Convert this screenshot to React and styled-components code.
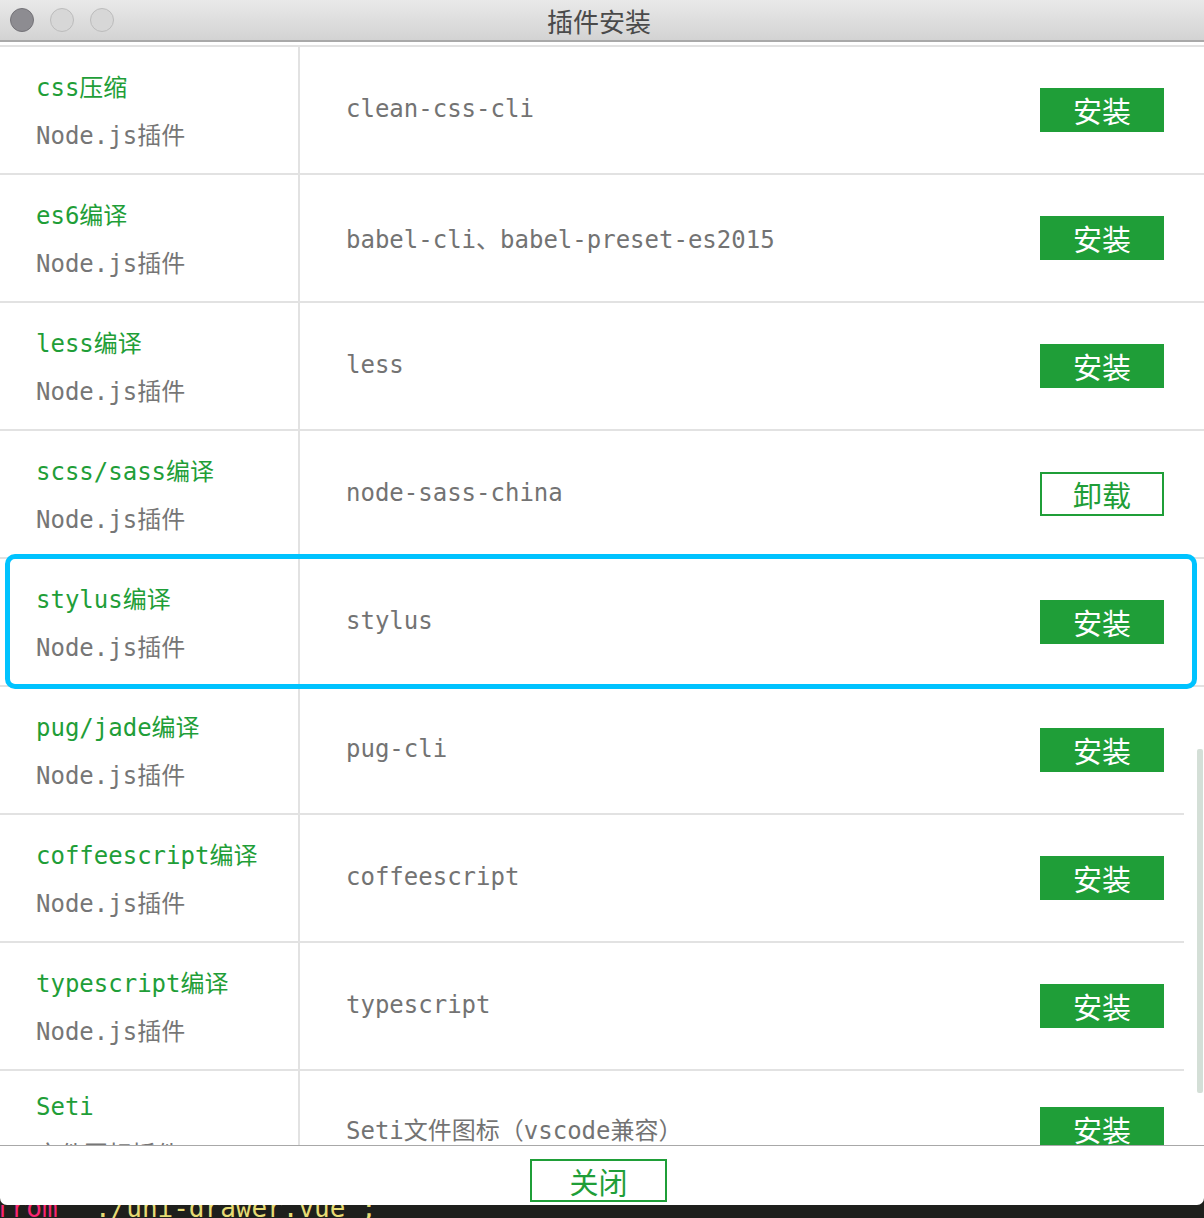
import React from "react";
import styled, { createGlobalStyle } from "styled-components";

const GlobalStyle = createGlobalStyle`
  html, body {
    margin: 0;
    padding: 0;
    background: #1e1f1c;
  }
`;

const MONO = `"DejaVu Sans Mono", "Noto Sans CJK SC", monospace`;
const GREEN = "#1f9e38";

const Window = styled.div`
  width: 1204px;
  height: 1205px;
  background: #ffffff;
  border-radius: 0 0 7px 7px;
  overflow: hidden;
  display: flex;
  flex-direction: column;
  font-family: ${MONO};
`;

const TitleBar = styled.div`
  height: 40px;
  flex-shrink: 0;
  display: flex;
  align-items: center;
  position: relative;
  background: linear-gradient(to bottom, #e9e9e9, #d3d3d3);
  border-bottom: 2px solid #a9a9a9;
`;

const Lights = styled.div`
  display: flex;
  gap: 16px;
  padding-left: 10px;
`;

const Light = styled.span`
  width: 22px;
  height: 22px;
  border-radius: 50%;
  background: ${(p) => (p.$active ? "#8d8c91" : "#d7d7d7")};
  border: 1px solid ${(p) => (p.$active ? "#747378" : "#bcbcbc")};
`;

const Title = styled.div`
  position: absolute;
  left: 0;
  right: 6px;
  text-align: center;
  font-family: "Noto Sans CJK SC", sans-serif;
  font-size: 26px;
  color: #4a4a4a;
`;

const List = styled.div`
  margin-top: 3px;
  height: 1100px;
  flex-shrink: 0;
  overflow: hidden;
  position: relative;
  border-top: 2px solid #e2e2e2;
  box-sizing: border-box;
`;

const Row = styled.div`
  height: 128px;
  box-sizing: border-box;
  display: flex;
  border-bottom: 2px solid #e2e2e2;
  position: relative;
  padding-bottom: ${(p) => (p.$lift ? "10px" : "0")};

  ${(p) =>
    p.$selected &&
    `
    &::after {
      content: "";
      position: absolute;
      left: 5px;
      right: 7px;
      top: -5px;
      bottom: -4px;
      border: 5px solid #00c3ff;
      border-radius: 10px;
      z-index: 3;
      pointer-events: none;
    }
  `}
`;

const NameCell = styled.div`
  width: 300px;
  flex-shrink: 0;
  border-right: 2px solid #e2e2e2;
  display: flex;
  flex-direction: column;
  justify-content: center;
  padding: 4px 0 0 36px;
  box-sizing: border-box;
`;

const Name = styled.div`
  font-size: 24px;
  line-height: 48px;
  color: ${GREEN};
  white-space: nowrap;
`;

const Kind = styled.div`
  font-size: 24px;
  line-height: 48px;
  color: #767676;
  white-space: nowrap;
`;

const PackageCell = styled.div`
  flex: 1;
  display: flex;
  align-items: center;
  padding-left: 46px;
  padding-bottom: 2px;
  font-size: 24px;
  color: #737373;
  white-space: nowrap;
`;

const ActionCell = styled.div`
  display: flex;
  align-items: center;
  padding-right: 40px;
`;

const ActionButton = styled.div`
  width: 124px;
  height: 44px;
  box-sizing: border-box;
  display: flex;
  align-items: center;
  justify-content: center;
  font-family: "Noto Sans CJK SC", sans-serif;
  font-size: 29px;
  background: ${(p) => (p.$outline ? "#ffffff" : GREEN)};
  color: ${(p) => (p.$outline ? GREEN : "#ffffff")};
  border: 2px solid ${GREEN};
`;

const ScrollTrack = styled.div`
  position: absolute;
  right: 0;
  top: 644px;
  bottom: 0;
  width: 20px;
  background: #ffffff;
  z-index: 2;
`;

const ScrollThumb = styled.div`
  position: absolute;
  right: 1px;
  top: 58px;
  width: 6px;
  height: 344px;
  border-radius: 2px;
  background: #d4dfd7;
`;

const Footer = styled.div`
  flex: 1;
  border-top: 1px solid #a8a8a8;
  display: flex;
  justify-content: center;
  padding-top: 13px;
`;

const CloseButton = styled.div`
  width: 137px;
  height: 43px;
  box-sizing: border-box;
  border: 2px solid ${GREEN};
  display: flex;
  align-items: center;
  justify-content: center;
  font-family: "Noto Sans CJK SC", sans-serif;
  font-size: 29px;
  color: ${GREEN};
  margin-right: 7px;
`;

const CodeStrip = styled.div`
  height: 13px;
  overflow: hidden;
  font-family: ${MONO};
  font-size: 26px;
  white-space: nowrap;
`;

const CodeLine = styled.div`
  margin-top: -12px;
  margin-left: -5px;
`;

const Keyword = styled.span`
  color: #f92672;
`;

const Str = styled.span`
  color: #e6db74;
  margin-left: 6px;
`;

const plugins = [
  { name: "css压缩", kind: "Node.js插件", pkg: "clean-css-cli" },
  { name: "es6编译", kind: "Node.js插件", pkg: "babel-cli、babel-preset-es2015" },
  { name: "less编译", kind: "Node.js插件", pkg: "less" },
  { name: "scss/sass编译", kind: "Node.js插件", pkg: "node-sass-china", installed: true },
  { name: "stylus编译", kind: "Node.js插件", pkg: "stylus", selected: true },
  { name: "pug/jade编译", kind: "Node.js插件", pkg: "pug-cli" },
  { name: "coffeescript编译", kind: "Node.js插件", pkg: "coffeescript" },
  { name: "typescript编译", kind: "Node.js插件", pkg: "typescript" },
  { name: "Seti", kind: "文件图标插件", pkg: "Seti文件图标（vscode兼容）", lift: true },
];

export default function App() {
  return (
    <>
      <GlobalStyle />
      <Window>
        <TitleBar>
          <Lights>
            <Light $active />
            <Light />
            <Light />
          </Lights>
          <Title>插件安装</Title>
        </TitleBar>
        <List>
          {plugins.map((p) => (
            <Row key={p.name} $selected={p.selected} $lift={p.lift}>
              <NameCell>
                <Name>{p.name}</Name>
                <Kind>{p.kind}</Kind>
              </NameCell>
              <PackageCell>{p.pkg}</PackageCell>
              <ActionCell>
                <ActionButton $outline={p.installed}>
                  {p.installed ? "卸载" : "安装"}
                </ActionButton>
              </ActionCell>
            </Row>
          ))}
          <ScrollTrack>
            <ScrollThumb />
          </ScrollTrack>
        </List>
        <Footer>
          <CloseButton>关闭</CloseButton>
        </Footer>
      </Window>
      <CodeStrip>
        <CodeLine>
          <Keyword>from</Keyword>
          <Str> './uni-drawer.vue';</Str>
        </CodeLine>
      </CodeStrip>
    </>
  );
}
